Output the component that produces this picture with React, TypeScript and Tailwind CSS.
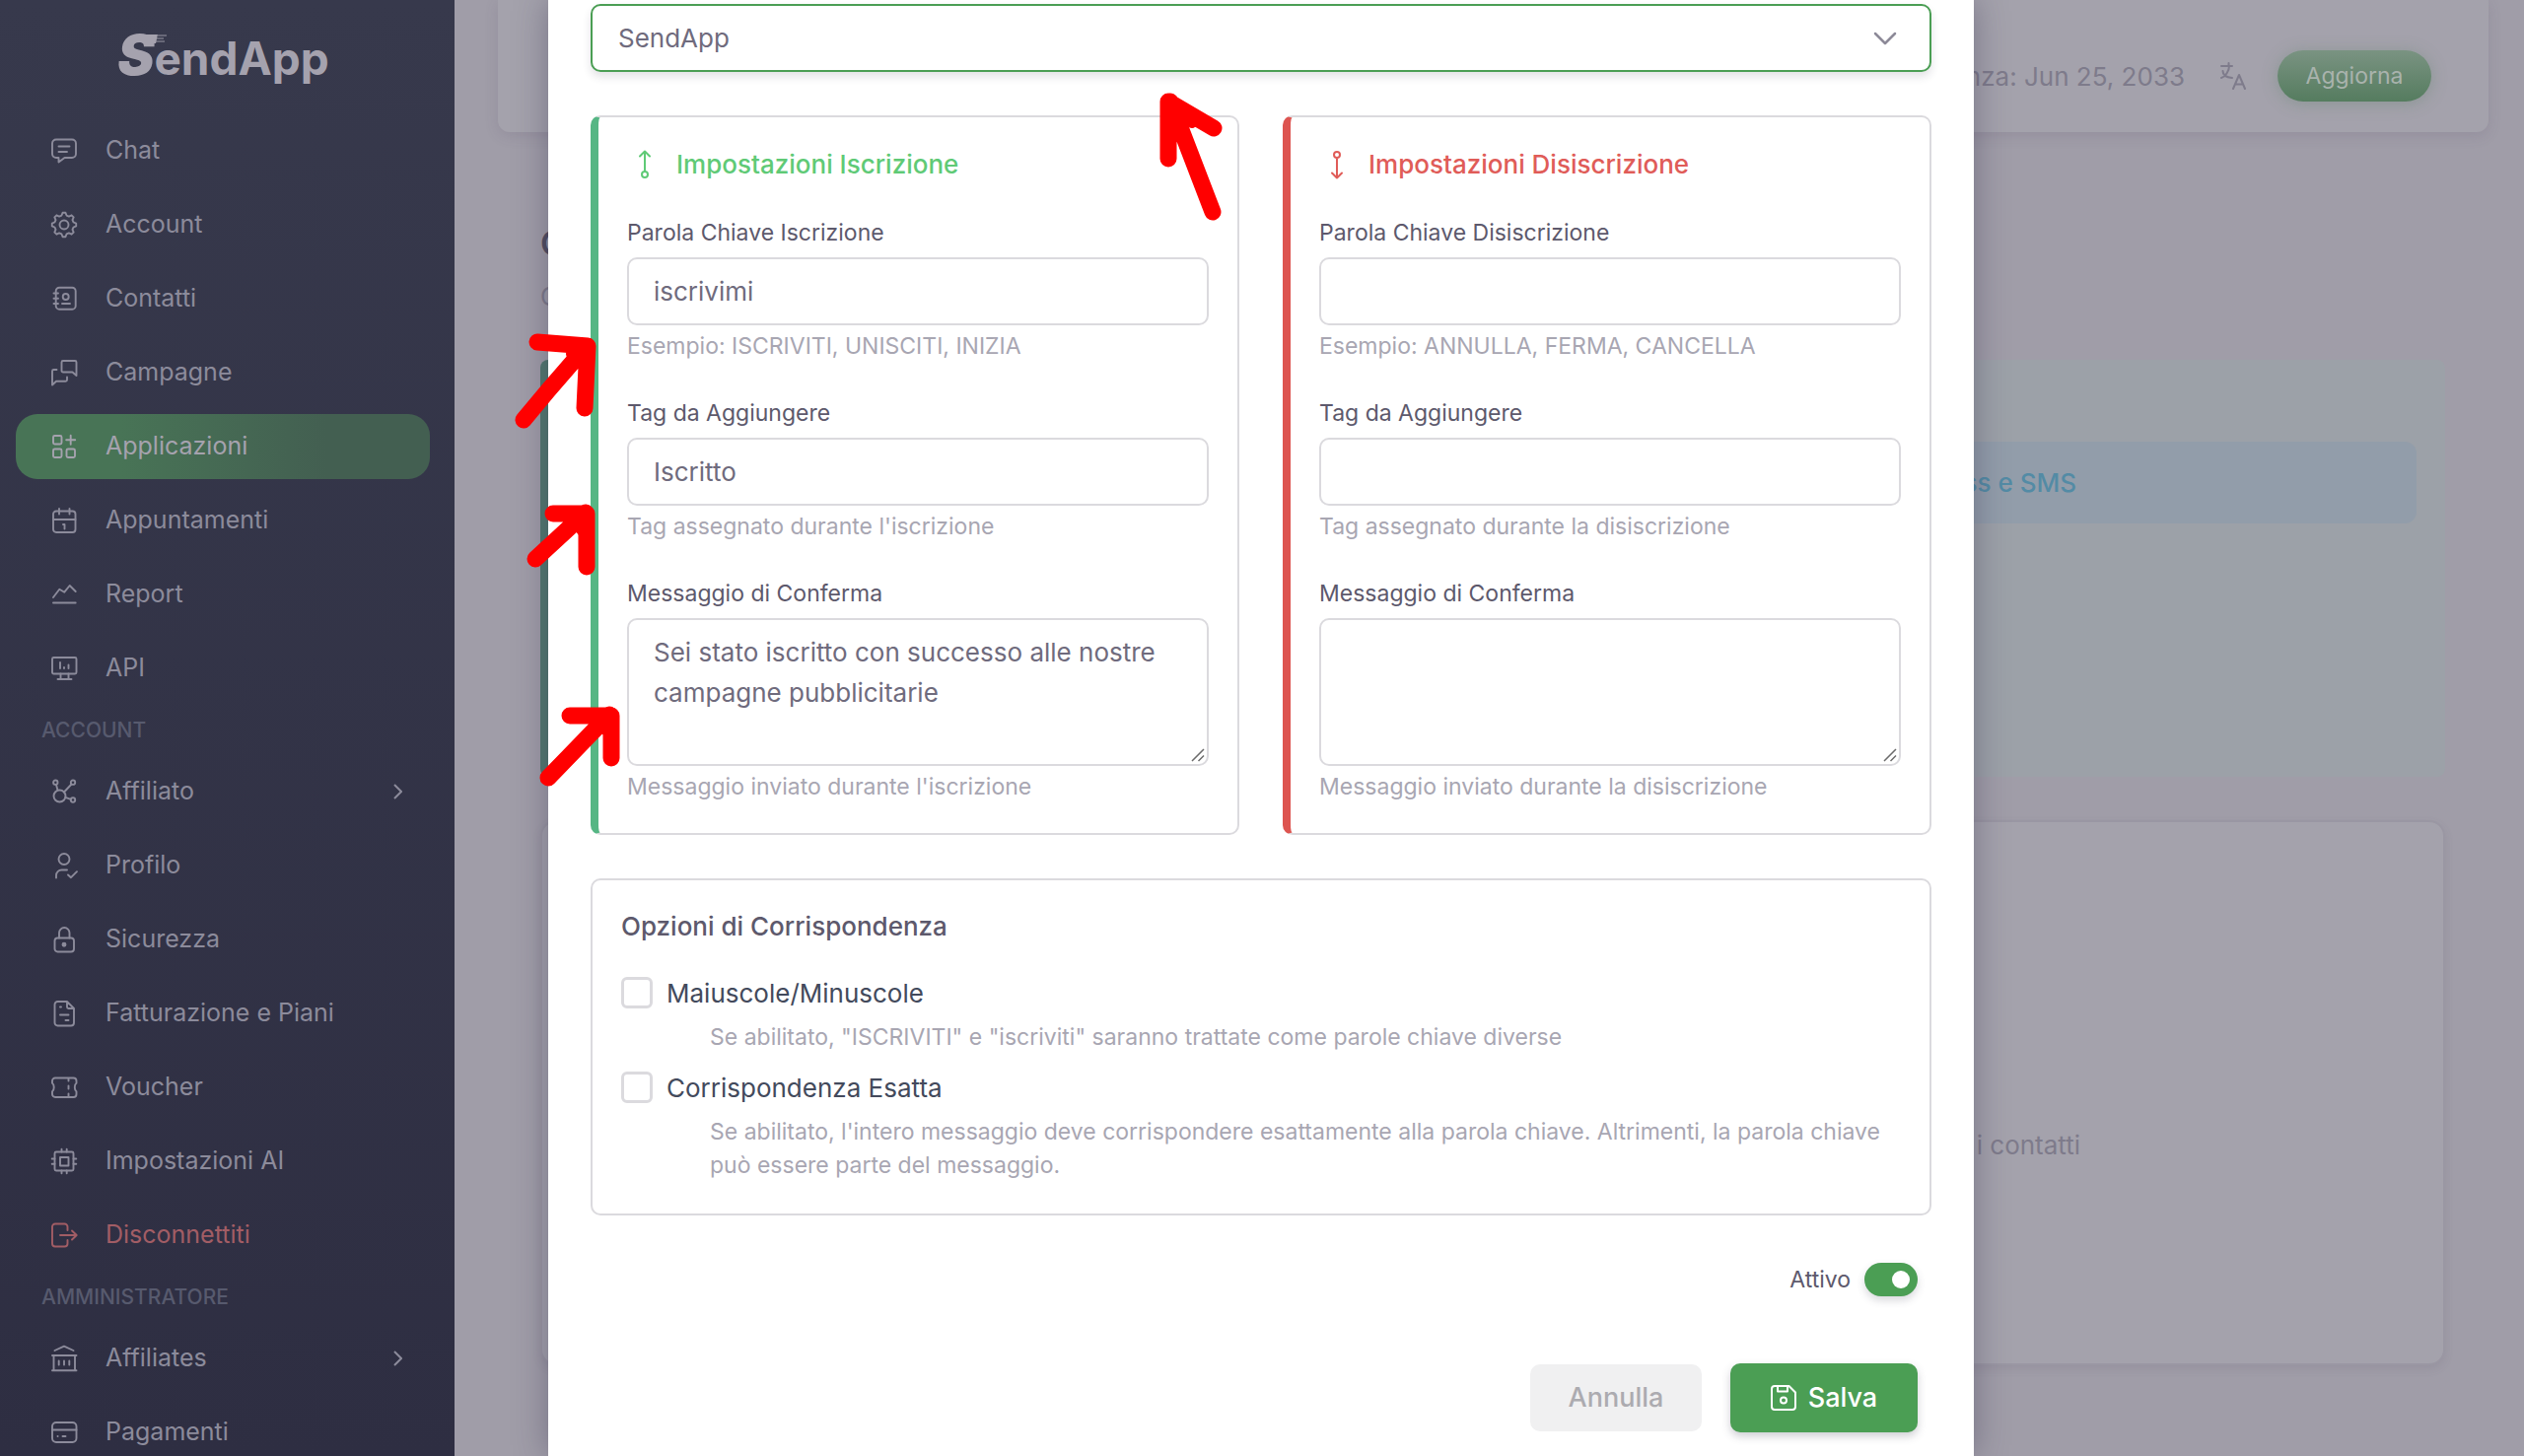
import { useState } from "react";
import type { ReactNode } from "react";

interface NavItem {
  label: string;
  icon: ReactNode;
  active?: boolean;
  danger?: boolean;
  expandable?: boolean;
}

interface NavSection {
  title?: string;
  items: NavItem[];
}

// Eight-toothed gear outline on the 26px grid
function gearPath() {
  const points: string[] = [];
  for (let i = 0; i < 8; i++) {
    const mid = (i * Math.PI) / 4 - Math.PI / 2;
    const steps: [number, number][] = [
      [-0.26, 9.8],
      [-0.12, 12.3],
      [0.12, 12.3],
      [0.26, 9.8],
    ];
    for (const [da, r] of steps) {
      points.push(`${(13 + r * Math.cos(mid + da)).toFixed(2)} ${(13 + r * Math.sin(mid + da)).toFixed(2)}`);
    }
  }
  return `M${points.join("L")}z`;
}

function Icon({ children }: { children: ReactNode }) {
  return (
    <svg
      viewBox="0 0 26 26"
      className="size-[26px] shrink-0 overflow-visible"
      fill="none"
      stroke="currentColor"
      strokeWidth={1.9}
      strokeLinecap="round"
      strokeLinejoin="round"
      aria-hidden
    >
      {children}
    </svg>
  );
}

const sections: NavSection[] = [
  {
    items: [
      {
        label: "Chat",
        icon: <path d="M5 1.5h16a4 4 0 0 1 4 4V16a4 4 0 0 1-4 4h-7.500l-6 4.500V20H5a4 4 0 0 1-4-4V5.500a4 4 0 0 1 4-4zM7.500 8.500h11M7.500 14H16" />,
      },
      {
        label: "Account",
        icon: (
          <>
            <path d={gearPath()} />
            <circle cx="13" cy="13" r="4.500" />
          </>
        ),
      },
      {
        label: "Contatti",
        icon: (
          <>
            <rect x="4.700" y="1.700" width="20" height="22" rx="3.500" />
            <circle cx="14.700" cy="11" r="3" />
            <path d="M2.500 7.500H7M2.500 12.700H7M2.500 18H7M11 18h8" />
          </>
        ),
      },
      {
        label: "Campagne",
        icon: (
          <path d="M12 1h12a1.500 1.500 0 0 1 1.500 1.500V16l-4-3.500H12a1.500 1.500 0 0 1-1.500-1.500V2.500A1.500 1.500 0 0 1 12 1zM5.500 10h-3A1.500 1.500 0 0 0 1 11.500V25.500l4-3.700h9.500a1.500 1.500 0 0 0 1.500-1.500V17.500" />
        ),
      },
      {
        label: "Applicazioni",
        active: true,
        icon: (
          <>
            <rect x="2" y="2" width="8.500" height="8.500" rx="1.500" />
            <rect x="2" y="15.500" width="8.500" height="8.500" rx="1.500" />
            <rect x="15.500" y="15.500" width="8.500" height="8.500" rx="1.500" />
            <path d="M19.700 1.700v9M15.200 6.200h9" />
          </>
        ),
      },
      {
        label: "Appuntamenti",
        icon: (
          <>
            <rect x="2" y="3.500" width="22.500" height="21.500" rx="3" />
            <path d="M2 12h22.500M8 1v5.500M18.500 1v5.500M12 17h1.500v4.500" />
          </>
        ),
      },
      {
        label: "Report",
        icon: <path d="M2 16 8.300 7.700l5 3L18.700 4l6 6M2 21.500h22.700" />,
      },
      {
        label: "API",
        icon: (
          <>
            <rect x="1" y="2" width="24.500" height="16.500" rx="1.500" />
            <path d="M9 7v6M13 12v1M17.500 9.500V13M9.500 18.500v5M17.500 18.500v5M6.500 24h14" />
          </>
        ),
      },
    ],
  },
  {
    title: "ACCOUNT",
    items: [
      {
        label: "Affiliato",
        expandable: true,
        icon: (
          <>
            <circle cx="8.500" cy="17.500" r="6" />
            <circle cx="4.300" cy="3.700" r="2.200" />
            <circle cx="22" cy="3.700" r="2.200" />
            <circle cx="22" cy="21.500" r="2.200" />
            <path d="m5 6 1.500 5.500M20.500 5.500l-7.500 8M14.300 18.800l5.500 2" />
          </>
        ),
      },
      {
        label: "Profilo",
        icon: (
          <>
            <circle cx="13" cy="6.500" r="5.500" />
            <path d="M5 25.500V23a5.500 5.500 0 0 1 5.500-5.500H16M17 22.500l3 2.700 6-6" />
          </>
        ),
      },
      {
        label: "Sicurezza",
        icon: (
          <>
            <rect x="3.500" y="11.500" width="19.500" height="14" rx="3" />
            <path d="M8 11.500V6.300a5 5 0 0 1 10.500 0v5.200" />
            <circle cx="13" cy="18.300" r="1.500" fill="currentColor" />
          </>
        ),
      },
      {
        label: "Fatturazione e Piani",
        icon: (
          <path d="M6.500 1H16l7 7v14.500a3 3 0 0 1-3 3H6.500a3 3 0 0 1-3-3V4a3 3 0 0 1 3-3zM16 1v5.500A1.500 1.500 0 0 0 17.500 8H23M9 6.500h1M9 14.500h8.500M14.500 20h3" />
        ),
      },
      {
        label: "Voucher",
        icon: (
          <path d="M4 3.500h18.500a3 3 0 0 1 3 3v2.300c-2.300 1.500-2.300 6.900 0 8.400v2.800a3 3 0 0 1-3 3H4a3 3 0 0 1-3-3v-2.800c2.300-1.500 2.300-6.900 0-8.400V6.500a3 3 0 0 1 3-3zM17.500 4v2.500M17.500 11.500v3M17.500 19.500V22" />
        ),
      },
      {
        label: "Impostazioni AI",
        icon: (
          <>
            <rect x="3.500" y="3.500" width="19" height="19" rx="1.500" />
            <rect x="9" y="9" width="8.500" height="8.500" />
            <path d="M10.500 3.500v-2.800M15.700 3.500v-2.800M10.500 25.300v-2.800M15.700 25.300v-2.800M.7 10.500h2.800M.7 15.700h2.800M22.500 10.500h2.800M22.500 15.700h2.800" />
          </>
        ),
      },
      {
        label: "Disconnettiti",
        danger: true,
        icon: <path d="M16.500 8V4.500a3 3 0 0 0-3-3H4a3 3 0 0 0-3 3v17a3 3 0 0 0 3 3h9.500a3 3 0 0 0 3-3V18M9 13h16.500M21 8.500l4.700 4.500-4.700 4.500" />,
      },
    ],
  },
  {
    title: "AMMINISTRATORE",
    items: [
      {
        label: "Affiliates",
        expandable: true,
        icon: <path d="M3.500 5 13 .7 22.500 5M1 10h24.500M2.500 10v15M24 10v15M1 25.200h24.500M7.700 15.500v4M13 15.500v4M18.300 15.500v4" />,
      },
      {
        label: "Pagamenti",
        icon: (
          <>
            <rect x="1" y="3" width="24.500" height="20" rx="4" />
            <path d="M1 10.500h24.500M6.500 17h.1M11.500 17h3" />
          </>
        ),
      },
    ],
  },
];

function Sidebar() {
  return (
    <aside className="w-[461px] shrink-0 overflow-hidden bg-linear-to-b from-[#37394c] to-[#2e2e42] px-4 pt-7">
      <a href="#" className="flex h-14 items-baseline justify-center pr-2 font-bold text-[#a5a2ae]">
        <span className="relative text-[56px] leading-14 font-black italic">
          S
          {/* speed streaks trailing off the S */}
          <svg viewBox="0 0 24 9" className="absolute top-[7px] left-[27px] h-[9px] w-6" aria-hidden>
            <path d="M0 0h14l-2 9H0z" fill="currentColor" />
            <path d="M14 1h9M13 4h7M12 7h9" stroke="currentColor" strokeWidth="1.5" opacity=".6" />
          </svg>
        </span>
        <span className="text-[46px] leading-14">endApp</span>
      </a>
      <nav className="mt-9 flex flex-col gap-[9px]">
        {sections.map((section, i) => (
          <div key={i} className="flex flex-col gap-[9px]">
            {section.title && (
              <h2 className="h-[41px] pl-[26px] text-[21px] leading-[41px] font-medium text-[#575a6e]">{section.title}</h2>
            )}
            {section.items.map((item) => (
              <NavLink key={item.label} item={item} />
            ))}
          </div>
        ))}
      </nav>
    </aside>
  );
}

function NavLink({ item }: { item: NavItem }) {
  let tone = "text-[#8c8b9b]";
  if (item.active) tone = "bg-linear-to-r from-[#487456] from-25% to-[#435f51] to-75% text-[#a5a2ae]";
  if (item.danger) tone = "text-[#a25d65]";
  return (
    <a href="#" className={`mr-[9px] flex h-[66px] items-center rounded-[22px] pr-7 pl-9 text-[25px] ${tone}`}>
      <Icon>{item.icon}</Icon>
      <span className="ml-[29px] grow">{item.label}</span>
      {item.expandable && (
        <svg viewBox="0 0 9 16" className="h-4 w-[9px]" fill="none" stroke="currentColor" strokeWidth="2" aria-hidden>
          <path d="m1 1 7 7-7 7" />
        </svg>
      )}
    </a>
  );
}

function Page() {
  return (
    <main className="flex grow flex-col bg-[#a09da8] text-[#7e7b8b]">
      <header className="mr-9 ml-11 flex h-[134px] shrink-0 items-center justify-end rounded-b-xl bg-[#a4a2ac] pt-5 pr-[58px] shadow-[0_4px_14px_rgba(80,70,100,0.15)]">
        <span className="text-[26px]">Scadenza: Jun 25, 2033</span>
        <svg
          viewBox="0 0 26 28"
          className="ml-9 h-7 w-[26px]"
          fill="none"
          stroke="currentColor"
          strokeWidth="2"
          strokeLinecap="round"
          strokeLinejoin="round"
          aria-hidden
        >
          <path d="M1 4h11M8.500 1v3M9 4c0 5-4 11-8 12M2.500 9c0 4 4 6.500 9.500 7M13 27l6-14 6 14M15 22.500h8" />
        </svg>
        <button className="ml-8 h-[52px] w-[156px] rounded-full bg-linear-to-b from-[#7a9382] to-[#557c5f] text-[23px] text-[#a9b3ad] shadow-[0_2px_16px_rgba(90,125,100,0.35)]">
          Aggiorna
        </button>
      </header>

      <div className="mr-20 ml-[87px] flex flex-col">
        <h1 className="mt-[93px] text-[34px] leading-10 font-semibold text-[#504d60]">CRM</h1>
        <p className="mt-[18px] text-[25px] leading-8">CRM</p>
        <section className="mt-12 h-[423px] rounded-lg border-l-8 border-[#52796f] bg-[#9ca1a8] px-[29px] pt-[83px]">
          <div className="flex h-[83px] items-center justify-end rounded-xl bg-[#929daa] pr-[345px] text-[26px] font-medium text-[#538ba5]">
            Business e SMS
          </div>
        </section>
        <section className="mt-11 flex h-[553px] items-center justify-end rounded-2xl border-2 border-[#9a97a3] bg-[#a4a2ac] pt-[106px] pr-[368px] text-[26px] shadow-[0_4px_10px_rgba(80,70,100,0.12)]">
          i contatti
        </section>
      </div>
    </main>
  );
}

const controlClass = "block w-full rounded-[10px] border-2 border-[#dbdade] bg-white px-[25px] text-[26px] text-[#6f6b7d] outline-none";

interface KeywordPanelProps {
  id: string;
  title: string;
  tone: "join" | "leave";
  keywordLabel: string;
  keyword: string;
  keywordHint: string;
  tag: string;
  tagHint: string;
  message: string;
  messageHint: string;
}

function Field({ id, label, hint, children }: { id: string; label: string; hint: string; children: ReactNode }) {
  return (
    <div className="mt-[34px]">
      <label htmlFor={id} className="block text-[23px] leading-[34px] text-[#5d596c]">
        {label}
      </label>
      <div className="relative mt-2">{children}</div>
      <p className="mt-1 text-[23px] leading-[34px] text-[#a8a6b2]">{hint}</p>
    </div>
  );
}

function KeywordPanel(props: KeywordPanelProps) {
  const { id, tone } = props;
  const join = tone === "join";
  return (
    <section
      className={`rounded-[10px] border-2 border-l-8 border-[#dbdade] px-[29px] py-[30px] ${join ? "border-l-[#56b684]" : "border-l-[#dd5450]"}`}
    >
      <h3 className={`flex h-9 items-center gap-[25px] pl-[11px] text-[26px] leading-9 font-medium ${join ? "text-[#5fca76]" : "text-[#e05c58]"}`}>
        <svg
          viewBox="0 0 14 30"
          className="h-[30px] w-3.5"
          fill="none"
          stroke="currentColor"
          strokeWidth="2"
          strokeLinecap="round"
          strokeLinejoin="round"
          aria-hidden
        >
          {join ? (
            <path d="M7 22V1.500M2 6.500l5-5 5 5M7 22a3 3 0 1 1 0 6 3 3 0 0 1 0-6z" />
          ) : (
            <path d="M7 8v20.500M2 23.500l5 5 5-5M7 8a3 3 0 1 1 0-6 3 3 0 0 1 0 6z" />
          )}
        </svg>
        {props.title}
      </h3>
      <Field id={`${id}-keyword`} label={props.keywordLabel} hint={props.keywordHint}>
        <input id={`${id}-keyword`} defaultValue={props.keyword} className={`${controlClass} h-[69px]`} />
      </Field>
      <Field id={`${id}-tag`} label="Tag da Aggiungere" hint={props.tagHint}>
        <input id={`${id}-tag`} defaultValue={props.tag} className={`${controlClass} h-[69px]`} />
      </Field>
      <Field id={`${id}-message`} label="Messaggio di Conferma" hint={props.messageHint}>
        <textarea
          id={`${id}-message`}
          defaultValue={props.message}
          className={`${controlClass} h-[150px] resize-none py-3 leading-[41px]`}
        />
        <svg
          viewBox="0 0 14 14"
          className="pointer-events-none absolute right-1 bottom-1 size-3.5"
          stroke="#6b6b6b"
          strokeWidth="1.500"
          aria-hidden
        >
          <path d="M1 13 13 1M7.500 13 13 7.500" />
        </svg>
      </Field>
    </section>
  );
}

function MatchOption({ id, label, hint, className }: { id: string; label: string; hint: string; className: string }) {
  return (
    <div className={className}>
      <div className="flex h-9 items-center gap-3.5">
        <input
          id={id}
          type="checkbox"
          className="size-8 appearance-none rounded-md border-[3px] border-[#dbdade] checked:bg-[#4b9e54]"
        />
        <label htmlFor={id} className="text-[26px] text-[#434a5c]">
          {label}
        </label>
      </div>
      <p className="mt-2.5 pl-[90px] text-[23px] leading-[34px] text-[#a8a6b2]">{hint}</p>
    </div>
  );
}

function KeywordModal() {
  const [active, setActive] = useState(true);
  return (
    <form
      role="dialog"
      aria-label="Impostazioni"
      className="min-h-full w-full max-w-[1446px] bg-white px-[43px] pt-1 shadow-[0_0_32px_rgba(50,45,75,0.4)]"
    >
      <div className="relative">
        <select
          aria-label="Account"
          className="block h-[69px] w-full appearance-none rounded-[10px] border-2 border-[#4b9e54] bg-white px-[26px] text-[26px] text-[#6f6b7d] shadow-[0_5px_8px_rgba(60,60,80,0.14)] outline-none"
        >
          <option>SendApp</option>
        </select>
        <svg
          viewBox="0 0 24 14"
          className="pointer-events-none absolute top-7 right-[35px] h-3.5 w-6"
          fill="none"
          stroke="#8d8a98"
          strokeWidth="2.500"
          strokeLinecap="round"
          strokeLinejoin="round"
          aria-hidden
        >
          <path d="m2 2 10 10L22 2" />
        </svg>
      </div>

      <div className="mt-11 grid grid-cols-2 gap-11">
        <KeywordPanel
          id="join"
          tone="join"
          title="Impostazioni Iscrizione"
          keywordLabel="Parola Chiave Iscrizione"
          keyword="iscrivimi"
          keywordHint="Esempio: ISCRIVITI, UNISCITI, INIZIA"
          tag="Iscritto"
          tagHint="Tag assegnato durante l'iscrizione"
          message="Sei stato iscritto con successo alle nostre campagne pubblicitarie"
          messageHint="Messaggio inviato durante l'iscrizione"
        />
        <KeywordPanel
          id="leave"
          tone="leave"
          title="Impostazioni Disiscrizione"
          keywordLabel="Parola Chiave Disiscrizione"
          keyword=""
          keywordHint="Esempio: ANNULLA, FERMA, CANCELLA"
          tag=""
          tagHint="Tag assegnato durante la disiscrizione"
          message=""
          messageHint="Messaggio inviato durante la disiscrizione"
        />
      </div>

      <section className="mt-11 rounded-[10px] border-2 border-[#dbdade] px-[29px] pt-[29px] pb-8">
        <h3 className="text-[26px] leading-9 font-medium text-[#5d596c]">Opzioni di Corrispondenza</h3>
        <MatchOption
          id="case"
          className="mt-[31px]"
          label="Maiuscole/Minuscole"
          hint={'Se abilitato, "ISCRIVITI" e "iscriviti" saranno trattate come parole chiave diverse'}
        />
        <MatchOption
          id="exact"
          className="mt-4"
          label="Corrispondenza Esatta"
          hint="Se abilitato, l'intero messaggio deve corrispondere esattamente alla parola chiave. Altrimenti, la parola chiave può essere parte del messaggio."
        />
      </section>

      <div className="mt-12 flex items-center justify-end gap-3.5 pr-3.5">
        <label htmlFor="active" className="text-[23px] leading-8 text-[#5d596c]">
          Attivo
        </label>
        <input
          id="active"
          type="checkbox"
          role="switch"
          checked={active}
          onChange={(e) => setActive(e.target.checked)}
          className="flex h-[34px] w-[54px] appearance-none items-center rounded-full bg-[#dbdade] px-2 shadow-[0_4px_8px_rgba(60,60,80,0.2)] before:size-[18px] before:rounded-full before:bg-white checked:justify-end checked:bg-[#4b9e54]"
        />
      </div>

      <div className="mt-[68px] flex items-center justify-end gap-[29px] pr-3.5 pb-6">
        <button type="button" className="h-[68px] w-[174px] rounded-[10px] bg-[#f0f0f1] text-[27px] font-medium text-[#acabb0]">
          Annulla
        </button>
        <button
          type="button"
          className="flex h-[70px] w-[190px] items-center justify-center gap-3 rounded-[10px] bg-[#4b9e54] text-[27px] font-medium text-white shadow-[0_4px_8px_rgba(60,60,80,0.25)]"
        >
          <Icon>
            <path
              strokeWidth="2"
              d="M4 1h14.500l6.500 6.500V22a3 3 0 0 1-3 3H4a3 3 0 0 1-3-3V4a3 3 0 0 1 3-3zM7 1v5.500h10V1"
            />
            <circle cx="13" cy="15.500" r="3" strokeWidth="2" />
          </Icon>
          Salva
        </button>
      </div>
    </form>
  );
}

// Hand-drawn red pointers laid over the form
function Pointers() {
  return (
    <svg
      viewBox="0 0 720 750"
      className="pointer-events-none absolute top-[50px] left-[520px] h-[750px] w-[720px]"
      fill="none"
      stroke="#ff0000"
      strokeWidth="17"
      strokeLinecap="round"
      strokeLinejoin="round"
      aria-hidden
    >
      <path d="M665 111V53l46 27M667 53l43 112" />
      <path d="M25 297l51 4-3 63M75 301L36 346 11 376" />
      <path d="M41 471h34v54M74 470l-51 47" />
      <path d="M58 676h42v43M98 675l-62 64" />
      <path d="M667 62l22 12M60 309l12 12M64 480l10 12M90 684l10 12" strokeWidth="12" />
    </svg>
  );
}

export default function App() {
  return (
    <div className="relative flex h-screen overflow-hidden font-['Inter','Liberation_Sans',sans-serif]">
      <Sidebar />
      <Page />
      <div className="absolute inset-0 flex justify-center pr-0.5">
        <KeywordModal />
      </div>
      <Pointers />
    </div>
  );
}
